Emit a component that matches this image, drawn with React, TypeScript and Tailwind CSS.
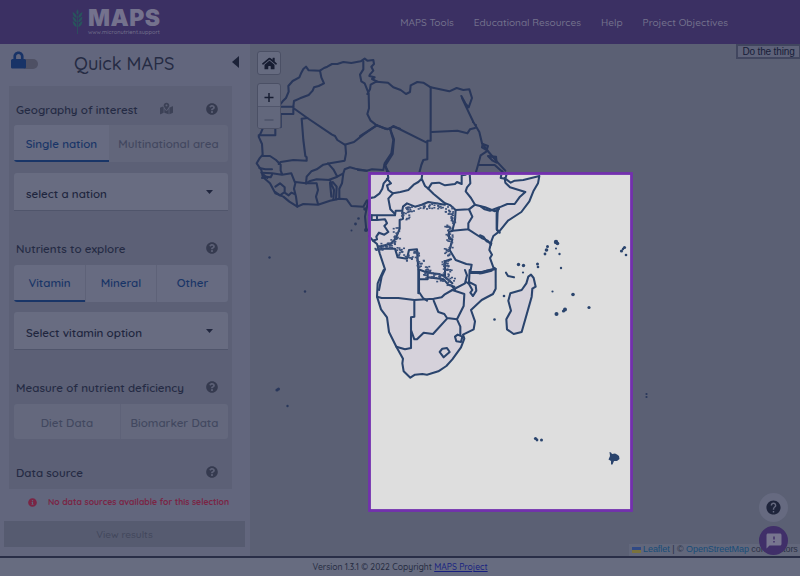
import React from "react";
import { FaHome, FaLock, FaMapMarkedAlt, FaQuestionCircle, FaInfoCircle } from "react-icons/fa";
import { MdFeedback, MdHelp } from "react-icons/md";

type Crop = { x: number; y: number; d: string[] };

const borders: Crop[] = [
  {
    x: 250,
    y: 40,
    d: [
      "M92 192L98 184L108 174L116 155L115 138L128 123L148 112L154 98L160 87L168 80L176 91L210 92L222 84L232 80L246 72L262 72L280 66L304 69L332 64L344 56L352 62L370 60L372 72L364 80L370 92L360 103L358 108L374 112L366 117L380 124",
      "M210 92L214 112L222 130L206 138L192 142L188 152L176 165L150 175L132 183L130 200",
      "M90 200H130V222H92V262M130 204L172 234L155 236L160 300L166 348L170 352L170 362L130 360L92 366L86 372",
      "M172 234L246 284L255 288L262 300L284 314L312 306L340 284L380 256L362 242L352 222L357 205L356 160L344 130L334 124L330 104L340 88L340 64M352 162L360 148L362 134L380 124",
      "M380 256L412 268L430 260L450 266M286 314L288 340L284 362L240 370L220 374L200 388L184 394L170 410L168 430",
      "M38 266L32 280L26 290L36 312L38 344L28 356L20 370L34 390L38 410L60 430L76 460L100 470L118 485L142 500L160 492L204 494L240 482L268 476L290 478L304 498L340 500L350 482",
      "M76 264V286H26M36 348L60 348L78 360L92 374L92 392L96 402M28 384L46 388L66 388M34 398L66 400L96 404L124 400L136 430L132 446L138 470L142 500",
      "M66 404L62 412L48 410L36 414M76 440L90 430L104 442L104 456L90 466L76 456M104 458L116 466L124 458L134 462M136 426L168 430L200 430L204 450L198 470L204 492",
      "M168 430L178 424L200 418L240 420L246 436L252 450L250 480M248 426L260 440L258 478M236 420L262 410L250 388L234 370M262 410L280 400L284 388L300 382L316 386L350 392L366 388L400 390L404 370L424 340L430 300L424 280L420 264M280 400L276 430L268 446L268 476M240 428L244 470M40 404L52 414",
      "M404 374L412 390L420 402",
    ],
  },
  {
    x: 360,
    y: 50,
    d: [
      "M50 95L84 98L100 112L122 120L138 132L150 126L152 106L172 96L190 98L212 112L240 118L268 124L290 114L310 120L328 118L336 144L326 172L316 160L304 138M306 144L322 178L340 216L358 246L366 280L386 306L410 334L436 362",
      "M212 112V272H202V328L190 330L184 345L178 368M200 278L100 228L90 236L76 236L50 226M90 236L102 268L98 312L76 346L82 368M216 246L292 242L322 250L330 238L345 234",
      "M380 304L362 316L354 345L404 345L432 370M354 345L348 366M0 258L50 226M20 362L-6 360",
      "M368 282L384 288L380 300L366 292ZM384 318L408 320L410 338L398 332Z",
    ],
  },
  {
    x: 365,
    y: 170,
    d: [
      "M68 10L70 24L56 40L52 56L44 70L28 82L16 84M66 26L78 40L66 46L70 60L84 70L70 86L76 118L90 132",
      "M84 70L106 66L130 60L146 44L160 36L170 26L172 10M170 26L180 48L190 56L206 72L240 100L256 106L272 120L312 118L330 104L318 84L302 64L306 52L316 40L314 10",
      "M190 56L200 40L222 38L240 46L270 42L276 36L290 42L290 16L302 14M330 104L360 112L390 124L402 116M398 118L396 180L404 188M312 118L322 140L310 160L310 178L262 182L270 150L272 120",
      "M310 178L350 204L368 212L378 224M262 182L252 186L252 206L262 208L254 240L272 270L304 282L320 284L316 306L350 306L388 296",
      "M12 136H60L90 136L92 122L112 122L114 110L126 100L150 110L170 104L190 96L240 104M112 122L114 146L104 150L104 176L92 206L76 222L40 230",
      "M20 136V150H36V140M36 150L60 148L66 160L58 168L70 186L58 194L42 188L34 200L36 208L24 212M38 236L90 236L98 262L126 266L132 240L156 238L158 270L160 298L176 304L200 310L222 312L240 320L262 340",
      "M160 300V370M160 328H188V306M188 322L236 328L250 344L268 350M240 322L240 274L258 268M12 198L24 212L36 222L44 250L60 298L50 320L42 360M10 90L0 140L4 180",
    ],
  },
  {
    x: 365,
    y: 270,
    d: [
      "M56 0L44 26L38 40L36 80L48 118L66 142L72 186L94 230L114 266L112 280L116 304L136 323L150 314L172 312L186 314L220 304L244 288L262 268L288 232L298 206L294 194L326 178L330 154L318 120L350 90L384 72L392 56L392 -4",
      "M36 80L50 84L100 84L148 90L206 86L230 82L238 74L262 60L298 72L296 108L276 148L246 144L238 132L220 126L206 92M148 90V140L138 142V234L120 238L94 230M138 180L148 208L156 208L176 188L204 192L246 146M276 148L286 170L286 194",
      "M270 200L278 194L292 200L288 216L274 214ZM224 246L232 236L246 234L254 246L236 262ZM162 0V66L174 84L186 92M262 60L300 40L306 16L300 0M314 0L312 36L332 46L334 62L324 78L316 68L322 60L312 42L304 36M316 8L350 10L380 2M262 50L270 60",
      "M498 14L506 24L512 50L502 56L500 80L486 130L470 186L446 192L426 178L424 148L438 122L430 92L436 70L470 60L484 40L490 20Z",
    ],
  },
  {
    x: 480,
    y: 170,
    d: [
      "M66 4L62 24L76 26L80 12M76 26L92 38L104 32L130 30L178 18L174 40L160 64L148 94L124 126L84 152L58 184L40 198L34 214L28 240L36 254L30 264L40 292L46 296",
      "M74 24L76 38L90 52L136 66L120 80L104 102L82 102L58 112L30 122L14 118L0 108M58 112L50 130V178L58 186M0 196L10 200L20 214L34 220M0 310L20 302L46 298",
      "M78 308L84 318L102 322",
    ],
  },
];

const mainland =
  "M368 172L368 236L378 246L385 270L378 284L377 297L381 309L388 320L389 332L396 347L402 360L404 371L410 377L418 374L438 371L452 359L462 345L465 333L474 329L474 319L471 310L482 300L494 292L495 268L491 267L489 250L491 241L499 231L508 221L523 208L533 193L539 176L511 182L504 172Z";
const madagascar = "M531 275L536 286L532 302L522 332L514 334L507 329L506 319L511 310L509 294L522 290Z";

// Islands as x, y, radius
const islands: number[][] = [
  [269.5, 257.5, 1.2], [305, 291.5, 1.2], [277, 390, 1.6], [278.5, 389, 1.5], [287.5, 406, 1.2],
  [358.5, 218.5, 1.3], [355.5, 224, 1.4], [351.5, 230.5, 1], [365, 209, 1.8], [366, 230, 2],
  [556, 242, 2.2], [557.5, 243.5, 1.8], [547.5, 246.5, 1.5], [546.5, 250, 1.8], [545, 254, 1.4], [556, 248.5, 1],
  [559.5, 254, 1.2], [561, 268, 1.2], [518.5, 264.5, 1.7], [523.5, 265.5, 1.7], [537.5, 264, 1.5], [538, 267, 1.3],
  [523, 272.5, 1.1], [504, 296, 1.3], [494.5, 319.5, 1.3], [552.5, 291.5, 1.1], [573, 294.5, 1.8], [565, 309.5, 2],
  [563.5, 311, 1.6], [556.5, 314, 2], [589, 307.5, 1.6], [621.5, 251, 1.6], [624.5, 247.5, 1.6], [623, 249, 1.2], [626, 255, 1.3],
  [535.5, 438.5, 1.6], [537, 440, 1.4], [541.5, 440, 1.5], [646.5, 394, 1.1], [646.5, 397, 1.1], [473, 122, 1], [476, 125, 1],
];

// Lakes and rivers speckled along the Congo basin frontier
const basin = [
  [404, 215, 9, 9], [410, 209, 10, 6], [423, 206, 12, 5], [437, 205, 12, 6], [448, 210, 9, 8], [452, 217, 6, 12],
  [447, 228, 6, 14], [449, 240, 6, 14], [446, 251, 6, 10], [396, 232, 7, 13], [392, 240, 8, 10], [386, 245, 12, 6],
  [378, 247, 8, 6], [400, 251, 8, 8], [408, 257, 9, 6], [416, 253, 6, 9], [420, 262, 10, 10], [424, 270, 12, 9],
  [432, 274, 14, 7], [441, 277, 12, 9], [447, 270, 10, 12], [449, 279, 10, 12], [444, 263, 8, 8],
];
const rnd = (n: number) => {
  const s = Math.sin(n * 12.9898) * 43758.5453;
  return s - Math.floor(s);
};
const speckles = basin.flatMap(([cx, cy, w, h], i) =>
  Array.from({ length: 14 }, (_, j) => [
    cx + (rnd(i * 41 + j * 3 + 1) - 0.5) * w,
    cy + (rnd(i * 37 + j * 5 + 2) - 0.5) * h,
  ]),
);

function Borders({ stroke }: { stroke: string }) {
  return (
    <g fill="none" stroke={stroke} strokeWidth="6.2" strokeLinejoin="round" strokeLinecap="round">
      {borders.map((b, i) => (
        <g key={i} transform={`translate(${b.x} ${b.y}) scale(0.33333)`}>
          {b.d.map((d, j) => (
            <path key={j} d={d} />
          ))}
        </g>
      ))}
      <g fill={stroke} stroke="none">
        {islands.map(([x, y, r], i) => (
          <circle key={i} cx={x} cy={y} r={r} />
        ))}
        <path d="M609.500 452L611 452.500L612 454L615 453.500L617 454.500L619 456L619.500 459L617 461L614 461L612.500 464.500L611 464.500L611 461L608.500 459.500L610 456Z" />
      </g>
    </g>
  );
}

function AfricaMap() {
  return (
    <svg className="block h-full w-full" viewBox="250 44 550 512">
      <defs>
        <clipPath id="focus">
          <rect x="371" y="175" width="260" height="335" />
        </clipPath>
      </defs>
      <Borders stroke="#29375b" />
      <rect x="369.5" y="173.5" width="262" height="337" fill="#dedede" stroke="#7330ae" strokeWidth="2.8" />
      <g clipPath="url(#focus)">
        <path d={mainland} fill="#d6d2db" />
        <path d={madagascar} fill="#d6d2db" />
        <Borders stroke="#2a446d" />
        <g fill="#3a517a">
          {speckles.map(([x, y], i) => (
            <rect key={i} x={x} y={y} width="2" height="1.6" />
          ))}
        </g>
      </g>
    </svg>
  );
}

function Wheat() {
  return (
    <svg className="mt-[-1px] h-[27px] w-[11px]" viewBox="0 0 12 27" fill="#28555d">
      <path d="M6 0Q8.400 3 6 6Q3.600 3 6 0Z" />
      {[3, 8, 13].map((y) => (
        <g key={y} transform={`translate(0 ${y})`}>
          <path d="M.6 0Q4.800 1.500 5.200 6.500Q.8 5.500 .6 0ZM11.400 0Q7.200 1.500 6.800 6.500Q11.200 5.500 11.400 0Z" />
        </g>
      ))}
      <path d="M5.600 7h.8v20h-.8z" />
    </svg>
  );
}

function Heading({ text, cls, map }: { text: string; cls: string; map?: boolean }) {
  return (
    <div className={`flex items-center pl-[2px] pr-[10.5px] ${cls}`}>
      <span className={`whitespace-nowrap text-[11.55px] font-semibold text-[#252b44] ${map ? "mr-[22px]" : ""}`}>{text}</span>
      {map && <FaMapMarkedAlt className="mt-[-2px] size-[13px] text-[#3c4156]" />}
      <FaQuestionCircle className="ml-auto mt-[-2px] size-[12px] text-[#353a4f]" />
    </div>
  );
}

function Select({ text }: { text: string }) {
  return (
    <div className="flex h-[38px] shrink-0 items-center justify-between rounded-t-[3px] border-b border-[#50556b] bg-[#686c81] pl-[12px] pr-[15px] pt-[4px] text-[11.55px] font-semibold text-[#20263e]">
      <span>{text}</span>
      <svg className="mb-[3px] h-[4px] w-[7px]" viewBox="0 0 7 4"><path d="M0 0h7L3.500 4z" fill="#20263e" /></svg>
    </div>
  );
}

const tab = "flex items-center justify-center whitespace-nowrap text-[11.55px] font-semibold";

export default function App() {
  return (
    <div className="flex h-[576px] w-[800px] flex-col overflow-hidden bg-[#62667d] font-['Quicksand','Lato',sans-serif]">
      <header className="flex h-[44px] shrink-0 items-center bg-[#3b3063] pl-[72px] pr-[72px]">
        <Wheat />
        <div className="ml-[5px] flex flex-col">
          <span className="h-[18px] font-['Inter',sans-serif] text-[23px] font-black leading-[18px] tracking-[0.5px] text-[#74728d]">MAPS</span>
          <span className="mt-[2px] h-[6px] whitespace-nowrap text-[5.7px] font-medium leading-[6px] text-[#74728d]">www.micronutrient.support</span>
        </div>
        <nav className="ml-auto flex gap-[20px] whitespace-nowrap pt-[2px] text-[10.05px] font-medium text-[#74728d]">
          <span>MAPS Tools</span>
          <span>Educational Resources</span>
          <span>Help</span>
          <span>Project Objectives</span>
        </nav>
      </header>
      <div className="flex h-[512px] shrink-0">
        <aside className="flex w-[250px] flex-col">
          <div className="flex h-[42px] shrink-0 items-center pl-[11px] pr-[11px]">
            <div className="mt-[-10px] flex items-center">
              <FaLock className="z-10 h-[18px] w-[15px] text-[#183367]" />
              <span className="-ml-[5px] mt-[8px] h-[10px] w-[17px] rounded-full bg-[#4e5064]" />
            </div>
            <h1 className="ml-[36px] mt-[-2px] whitespace-nowrap text-[18.1px] font-medium text-[#252b43]">Quick MAPS</h1>
            <svg className="ml-auto mt-[-6px] h-[12px] w-[7px]" viewBox="0 0 7 12"><path d="M7 0V12L0 6z" fill="#1c2238" /></svg>
          </div>
          <section className="ml-[9px] flex h-[403px] w-[223px] shrink-0 flex-col bg-[#5c6076] pl-[5px] pr-[4px]">
            <Heading text="Geography of interest" cls="h-[39px] pt-[8px]" map />
            <div className="flex h-[37px] shrink-0 overflow-hidden rounded-[3px] bg-[#62667b]">
              <div className={`${tab} w-[95px] border-b-2 border-[#193567] bg-[#676b81] pt-[2px] text-[#193567]`}>Single nation</div>
              <div className={`${tab} flex-1 text-[#424860]`}>Multinational area</div>
            </div>
            <div className="h-[11px] shrink-0" />
            <Select text="select a nation" />
            <Heading text="Nutrients to explore" cls="h-[54px] pt-[21px]" />
            <div className="flex h-[37px] shrink-0 overflow-hidden rounded-[3px] bg-[#676b81] text-[#193567]">
              <div className={`${tab} w-[71px] border-b-2 border-[#193567]`}>Vitamin</div>
              <div className={`${tab} w-[72px] border-x border-[#5e6278] pb-[2px]`}>Mineral</div>
              <div className={`${tab} flex-1 pb-[2px]`}>Other</div>
            </div>
            <div className="h-[10px] shrink-0" />
            <Select text="Select vitamin option" />
            <Heading text="Measure of nutrient deficiency" cls="h-[54px] pt-[22px]" />
            <div className="flex h-[35px] shrink-0 overflow-hidden rounded-[3px] bg-[#64687d] text-[#424860]">
              <div className={`${tab} w-[107px] border-r border-[#5e6278] pt-[2px]`}>Diet Data</div>
              <div className={`${tab} flex-1 pt-[2px]`}>Biomarker Data</div>
            </div>
            <Heading text="Data source" cls="h-[50px] pt-[18px]" />
          </section>
          <div className="flex h-[30px] shrink-0 items-center pb-[3px] pl-[28px] text-[#7a2545]">
            <FaInfoCircle className="size-[9px]" />
            <span className="ml-[11px] whitespace-nowrap text-[8.66px] font-bold">No data sources available for this selection</span>
          </div>
          <div className="ml-[4px] mt-[2px] flex h-[26px] w-[241px] shrink-0 items-center justify-center bg-[#565b70] pt-[2px] text-[10.1px] font-medium text-[#42475c]">View results</div>
        </aside>
        <main className="relative h-[512px] w-[550px] bg-[#5b6074]">
          <AfricaMap />
          <div className="absolute left-[7px] top-[7px] flex size-[24px] items-center justify-center rounded-[3px] border border-[#4b5065] bg-[#666b80]">
            <FaHome className="size-[15px] text-[#171d32]" />
          </div>
          <div className="absolute left-[7px] top-[39px] flex h-[46px] w-[24px] flex-col overflow-hidden rounded-[3px] border border-[#4b5065] bg-[#666b80]">
            <svg viewBox="0 0 22 44"><path d="M0 22H22V44H0z" fill="#62677c" /><path d="M6.500 13.500H15.500M11 9V18" stroke="#171d32" strokeWidth="1.500" /><path d="M0 22.500H22" stroke="#50556b" /><path d="M6.500 36H15.500" stroke="#4c5268" strokeWidth="1.500" /></svg>
          </div>
          <button className="absolute right-0 top-0 flex h-[15px] w-[64px] items-center justify-center whitespace-nowrap border-2 border-r border-[#41465f] bg-[#5e6279] font-['Liberation_Sans',sans-serif] text-[10px] tracking-[-0.15px] text-[#171d38]">Do the thing</button>
          <div className="absolute bottom-0 right-0 flex h-[12px] w-[171px] items-center whitespace-nowrap bg-[#62677b] pl-[3px] font-['Liberation_Sans',sans-serif] text-[9px] tracking-[-0.05px] text-[#2c3146]">
            <svg className="mr-[2px] h-[6px] w-[9px]" viewBox="0 0 9 6"><path d="M0 0h9v3H0z" fill="#304985" /><path d="M0 3h9v3H0z" fill="#7a723d" /></svg>
            <span className="text-[#184c78]">Leaflet</span>
            <span className="mx-[2.5px]">|</span>
            <span>©&nbsp;</span>
            <span className="text-[#184c78]">OpenStreetMap</span>
            <span>&nbsp;contributors</span>
          </div>
          <div className="absolute right-[12px] top-[449px] flex size-[29px] items-center justify-center rounded-full bg-[#666a80]">
            <MdHelp className="size-[17px] text-[#1e243b]" />
          </div>
          <div className="absolute right-[12px] top-[482px] flex size-[29px] items-center justify-center rounded-full bg-[#402f69]">
            <MdFeedback className="size-[18px] text-[#77758f]" />
          </div>
        </main>
      </div>
      <footer className="flex h-[20px] shrink-0 items-center justify-center border-t-2 border-[#292e47] bg-[#676c80] pt-[1px] text-[8.57px] font-medium text-[#252b40]">
        <span>Version 1.3.1 © 2022 Copyright&nbsp;</span>
        <span className="text-[#171f80] underline">MAPS Project</span>
      </footer>
    </div>
  );
}
